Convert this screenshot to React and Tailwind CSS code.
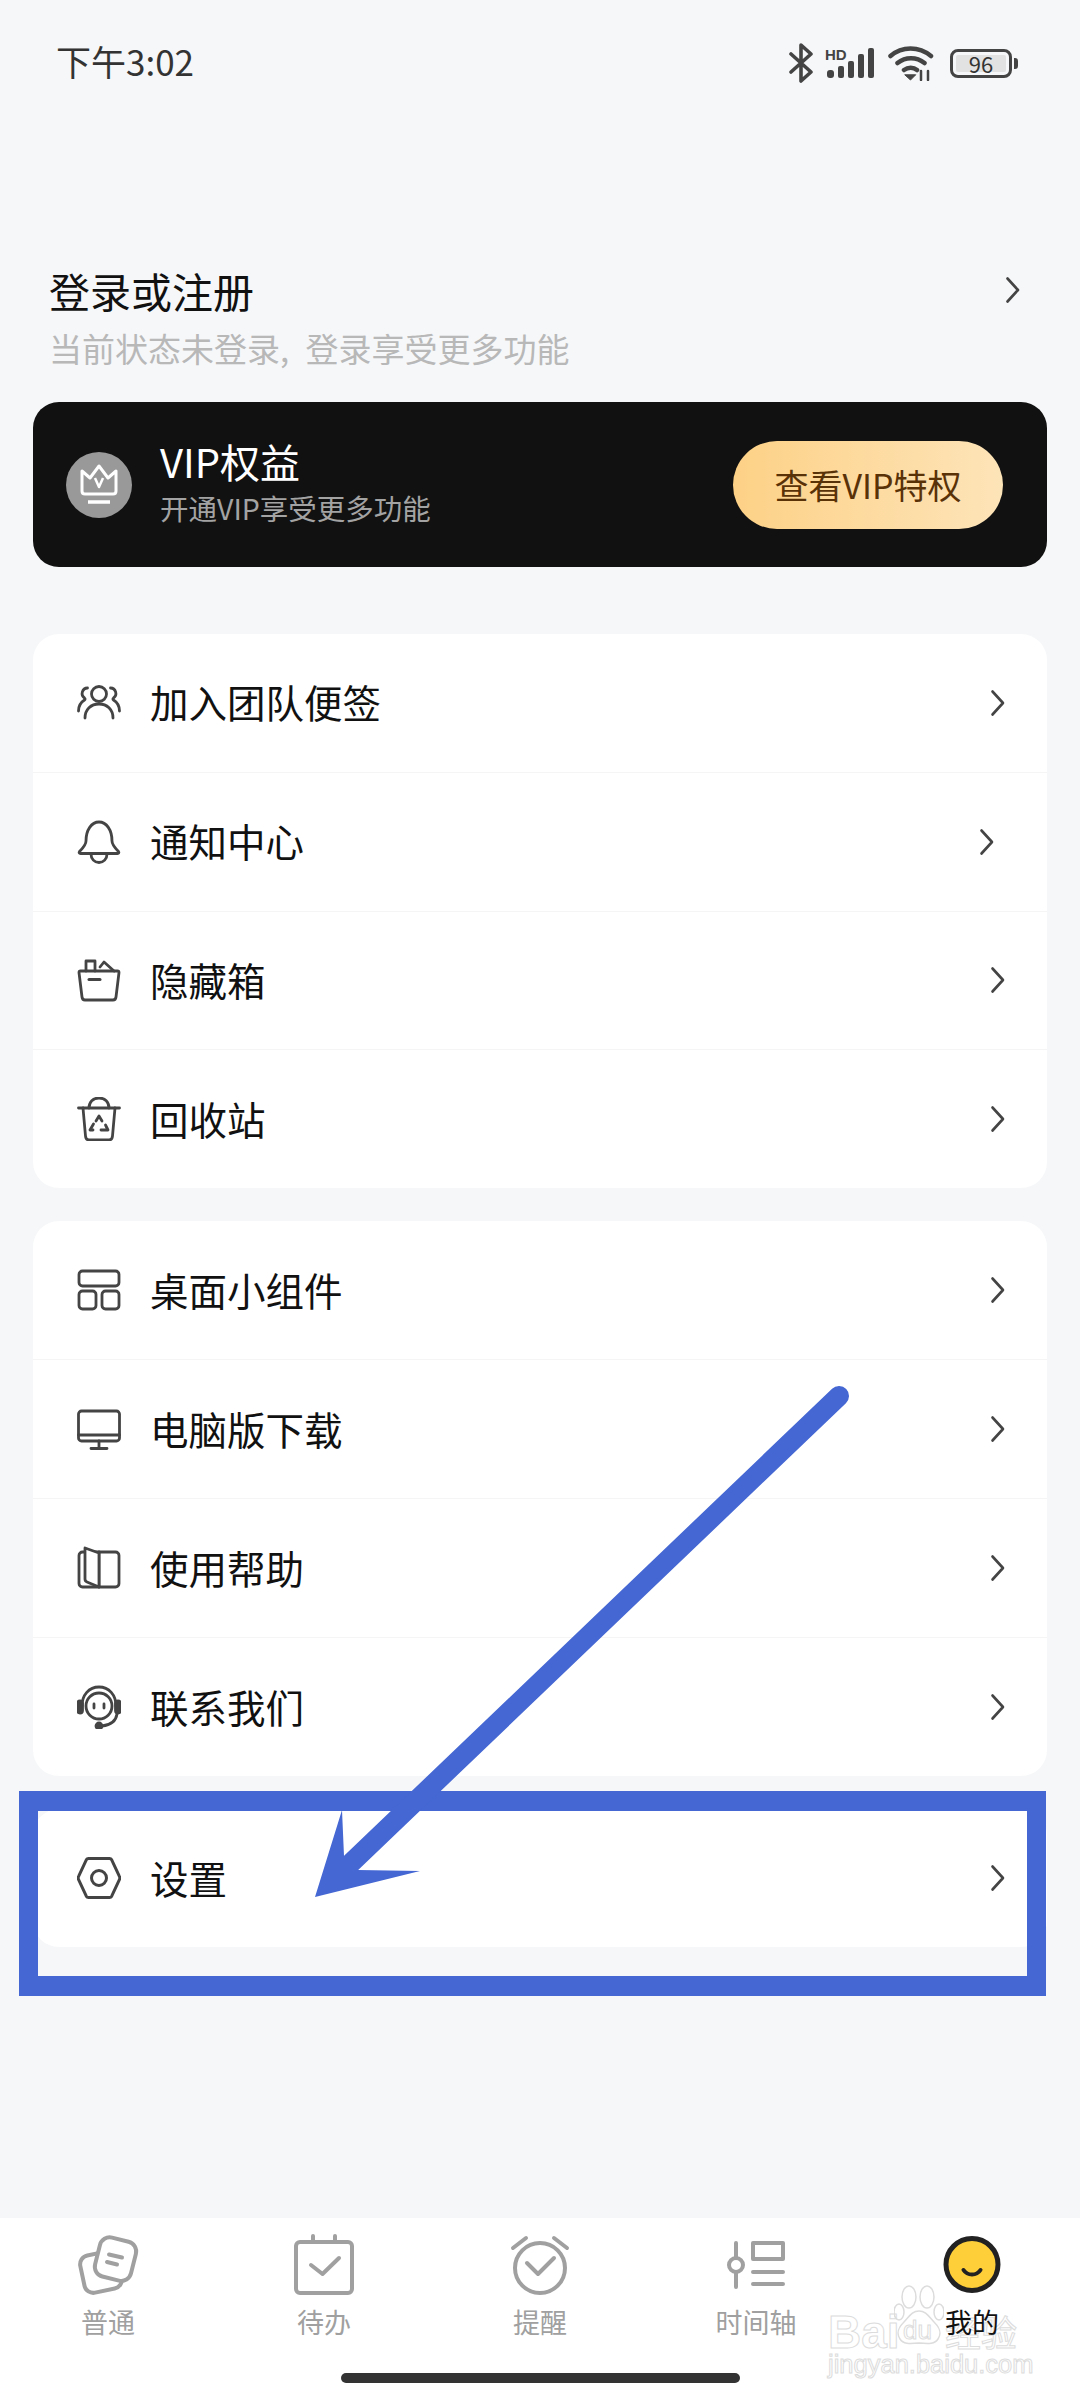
import React from "react";

const Chevron = ({ className = "" }) => (
  <svg width="16" height="28" viewBox="0 0 16 28" fill="none" stroke="#444" strokeWidth="2.6" strokeLinecap="round" strokeLinejoin="round" className={className}>
    <path d="M2.5 2.5 13 14 2.5 25.5" />
  </svg>
);

const MenuIcon = ({ children }) => (
  <svg width="44" height="44" viewBox="0 0 44 44" fill="none" stroke="#444" strokeWidth="2.8" strokeLinecap="round" strokeLinejoin="round" className="shrink-0">
    {children}
  </svg>
);

const UsersIcon = () => (
  <MenuIcon>
    <circle cx="22" cy="13" r="7.5" />
    <path d="M8 37c0-8.5 6-14 14-14s14 5.500 14 14" />
    <path d="M10.500 7a5.500 5.500 0 0 0-3 10c.8.6.8 1.500 0 2C3.500 21.500 1.500 25 1.500 30" />
    <path d="M33.500 7a5.500 5.500 0 0 1 3 10c-.8.6-.8 1.500 0 2 4 2.500 6 6 6 11" />
  </MenuIcon>
);

const BellIcon = () => (
  <MenuIcon>
    <path d="M9 21c0-11 5.500-19 13-19s13 8 13 19c0 4 3 7 6.500 10.500.8 1.200.3 2-1 2H3.500c-1.300 0-1.800-.8-1-2C6 28 9 25 9 21Z" />
    <path d="M14 34c0 5 3.500 8.500 8 8.500s8-3.500 8-8.500" />
  </MenuIcon>
);

const BasketIcon = () => (
  <MenuIcon>
    <path d="M2 14.500c0-.8.6-1.500 1.500-1.500h37c.9 0 1.500.7 1.500 1.500L39 39c-.2 1.800-1.300 3-3 3H8c-1.700 0-2.800-1.200-3-3L2 14.500Z" />
    <path d="M9 13V3h9v10M23 9l4-5 10 9" />
    <path d="M12 21.500h11" strokeWidth="3" />
  </MenuIcon>
);

const TrashIcon = () => (
  <MenuIcon>
    <path d="M12 11c0-6 4-10 10-10s10 4 10 10" />
    <path d="M1.500 11h41" />
    <path d="M6 11l2.500 28c.2 2.300 1.500 4 3.500 4h20c2 0 3.300-1.700 3.500-4L38 11" />
    <path d="M19 24l3-5 3 5M28.500 28l2.500 5h-7M16 33h-3l3.500-6" strokeWidth="2.8" />
  </MenuIcon>
);

const WidgetIcon = () => (
  <MenuIcon>
    <rect x="2" y="3" width="40" height="15" rx="3.500" />
    <rect x="2" y="23" width="17" height="18" rx="3.500" />
    <rect x="25" y="23" width="17" height="18" rx="3.500" />
  </MenuIcon>
);

const MonitorIcon = () => (
  <MenuIcon>
    <rect x="1.500" y="4" width="41" height="30" rx="3" />
    <path d="M1.500 28h41M22 34v7M14 41.500h16" />
  </MenuIcon>
);

const BookIcon = () => (
  <MenuIcon>
    <rect x="2" y="6" width="40" height="35" rx="3.500" />
    <path d="M22 6v35" />
    <path d="M8 2l14 5v34L10 36c-1.300-.5-2-1.500-2-3V2Z" fill="#fff" />
  </MenuIcon>
);

const HeadsetIcon = () => (
  <MenuIcon>
    <path d="M5 21C5 10 12 2 22 2s17 8 17 19" />
    <rect x="9" y="8" width="26" height="26" rx="13" />
    <rect x="0.500" y="16" width="5" height="12" rx="2.500" fill="#444" />
    <rect x="38.500" y="16" width="5" height="12" rx="2.500" fill="#444" />
    <path d="M17 19v4M27 19v4" />
    <path d="M40 29c-1 7-6 11-15 12" />
    <circle cx="22" cy="41" r="3" fill="#444" />
  </MenuIcon>
);

const HexIcon = () => (
  <MenuIcon>
    <path d="M11.500 2.500h21c1 0 1.700.4 2.200 1.300l7.700 16.500c.5 1 .5 2.400 0 3.400l-7.700 16.500c-.5.900-1.200 1.300-2.200 1.300h-21c-1 0-1.700-.4-2.200-1.300L1.600 23.700c-.5-1-.5-2.400 0-3.400L9.300 3.800c.5-.9 1.200-1.300 2.200-1.300Z" strokeWidth="3" />
    <circle cx="22" cy="22" r="7.500" strokeWidth="3" />
  </MenuIcon>
);

const groupOne = [
  { name: "加入团队便签", icon: <UsersIcon /> },
  { name: "通知中心", icon: <BellIcon />, shift: true },
  { name: "隐藏箱", icon: <BasketIcon /> },
  { name: "回收站", icon: <TrashIcon /> },
];

const groupTwo = [
  { name: "桌面小组件", icon: <WidgetIcon /> },
  { name: "电脑版下载", icon: <MonitorIcon /> },
  { name: "使用帮助", icon: <BookIcon /> },
  { name: "联系我们", icon: <HeadsetIcon /> },
];

const MenuRow = ({ item }) => (
  <div className="flex-1 flex items-center pl-[44px] pr-[41px] border-b border-[#f5f5f6] last:border-b-0">
    {item.icon}
    <span className="ml-[29px] mb-[3px] text-[38.5px] leading-[50px] text-[#111]">{item.name}</span>
    <Chevron className={item.shift ? "ml-auto mr-[11px]" : "ml-auto"} />
  </div>
);

const NavIcon = ({ children }) => (
  <svg width="64" height="64" viewBox="0 0 64 64" fill="none" stroke="#a0a0a0" strokeWidth="4" strokeLinecap="round" strokeLinejoin="round">
    {children}
  </svg>
);

const tabs = [
  {
    name: "普通",
    icon: (
      <NavIcon>
        <rect x="6" y="20" width="38" height="38" rx="9" transform="rotate(-12 25 39)" />
        <rect x="21" y="6" width="37" height="40" rx="10" transform="rotate(14 39 26)" fill="#fff" />
        <path d="M33 21.500l13 3M31 29l10 2.500" />
      </NavIcon>
    ),
  },
  {
    name: "待办",
    icon: (
      <NavIcon>
        <rect x="4" y="9" width="56" height="51" rx="4" />
        <path d="M21 3v6M43 3v6M19 32l11.500 9L47 25" />
      </NavIcon>
    ),
  },
  {
    name: "提醒",
    icon: (
      <NavIcon>
        <circle cx="32" cy="35" r="25" />
        <path d="M5 15 18 5M59 15 46 5M19 30l11 11 16-16" />
      </NavIcon>
    ),
  },
  {
    name: "时间轴",
    icon: (
      <NavIcon>
        <path d="M12 10v15M12 39v15" />
        <circle cx="12" cy="32" r="7" />
        <rect x="29" y="10" width="30" height="16" />
        <path d="M29 39h30M29 51h30" />
      </NavIcon>
    ),
  },
  {
    name: "我的",
    active: true,
    icon: (
      <svg width="64" height="64" viewBox="0 0 64 64" fill="none">
        <circle cx="32" cy="31.500" r="26" fill="#ffcf39" stroke="#222" strokeWidth="5" />
        <path d="M23.500 37c2 3 5 4.500 8.500 4.500s6.500-1.500 8.500-4.500" stroke="#222" strokeWidth="4" strokeLinecap="round" />
      </svg>
    ),
  },
];

export default function App() {
  return (
    <div className="relative w-[1080px] h-[2400px] flex flex-col overflow-hidden bg-[#f6f7f9] font-['Noto_Sans_CJK_SC',sans-serif]">
      {/* status bar */}
      <div className="h-[126px] flex items-center justify-between pl-[56px] pr-[62px]">
        <span className="mb-[3px] text-[35px] text-[#333]">下午3:02</span>
        <div className="flex items-center">
          <svg width="24" height="40" viewBox="0 0 24 40" fill="none" stroke="#444" strokeWidth="3.600" strokeLinecap="round" strokeLinejoin="round">
            <path d="M2 11l20 18-10 9V2l10 9L2 29" />
          </svg>
          <div className="relative ml-[12px] w-[50px] h-[30px]">
            <span className="absolute left-0 top-[-1px] text-[15px] leading-[15px] font-bold text-[#444] font-['Liberation_Sans',sans-serif]">HD</span>
            <svg width="50" height="30" viewBox="0 0 50 30" fill="#444" className="absolute inset-0">
              <rect x="2" y="22" width="7" height="8" rx="3" />
              <rect x="13" y="18" width="6" height="12" rx="2" />
              <rect x="23" y="13" width="6" height="17" rx="2" />
              <rect x="33" y="6" width="6" height="24" rx="2" />
              <rect x="43" y="0" width="6" height="30" rx="2" />
            </svg>
          </div>
          <svg width="46" height="36" viewBox="0 0 46 36" fill="none" stroke="#444" strokeWidth="4.500" strokeLinecap="round" className="ml-[13px]">
            <path d="M2.500 11C14 1 31 1 43 11M9.500 18c8-6.500 19-6.500 27 0M16 25c4-3 9.500-3 13 0" />
            <path d="M17 30l5.500 5 5-5Z" fill="#444" strokeWidth="1" />
            <path d="M33 26v9M40 26v9" strokeWidth="2.500" />
          </svg>
          <div className="ml-[16px] flex items-center">
            <div className="w-[62px] h-[29px] rounded-[8px] border-[3px] border-[#444] p-[3px]">
              <div className="h-full rounded-[2px] bg-[#e2e2e2] flex items-center justify-center text-[22px] leading-none text-[#333]">96</div>
            </div>
            <div className="ml-[2px] w-[4px] h-[11px] rounded-r-[3px] bg-[#444]" />
          </div>
        </div>
      </div>

      {/* login */}
      <div className="mt-[139px] pl-[49px] pr-[59px] flex items-center justify-between">
        <span className="text-[41px] leading-[50px] text-[#111]">登录或注册</span>
        <Chevron />
      </div>
      <div className="mt-[11px] mb-[2px] pl-[49px] text-[33px] leading-[44px] text-[#b8b8b8]">
        当前状态未登录<span className="mr-[9px]">,</span> 登录享受更多功能
      </div>

      {/* vip */}
      <div className="mt-[30px] mx-[33px] h-[165px] rounded-[26px] bg-[#111] flex items-center pl-[33px] pr-[44px]">
        <div className="w-[66px] h-[66px] rounded-full bg-[#999] flex items-center justify-center">
          <svg width="40" height="44" viewBox="0 0 40 44" fill="none" stroke="#fff" strokeWidth="3" strokeLinejoin="round">
            <path d="M3 8l8 7 9-12 9 12 8-7v20c0 2-1 3-3 3H6c-2 0-3-1-3-3V8Z" />
            <path d="M16 15l4 9 4-9" strokeWidth="2.500" />
            <path d="M9 39h22" strokeWidth="3.500" />
          </svg>
        </div>
        <div className="ml-[28px] mb-[4px] flex flex-col">
          <span className="text-[40px] leading-[48px] text-white">VIP权益</span>
          <span className="mt-[3px] text-[28.5px] leading-[40px] text-[#a3a3a3]">开通VIP享受更多功能</span>
        </div>
        <div className="ml-auto w-[270px] h-[88px] rounded-full bg-gradient-to-r from-[#fdd186] to-[#fde4b8] flex items-center justify-center text-[34px] text-[#5a3208]">查看VIP特权</div>
      </div>

      {/* menu groups */}
      <div className="mt-[67px] mx-[33px] h-[554px] rounded-[26px] bg-white flex flex-col">
        {groupOne.map((item) => (
          <MenuRow key={item.name} item={item} />
        ))}
      </div>
      <div className="mt-[33px] mx-[33px] h-[555px] rounded-[26px] bg-white flex flex-col">
        {groupTwo.map((item) => (
          <MenuRow key={item.name} item={item} />
        ))}
      </div>
      <div className="mt-[33px] mx-[33px] h-[138px] rounded-[26px] bg-white flex flex-col">
        <MenuRow item={{ name: "设置", icon: <HexIcon /> }} />
      </div>

      {/* bottom nav */}
      <div className="mt-auto h-[182px] bg-white flex flex-col">
        <div className="grid grid-cols-5 pt-[15px]">
          {tabs.map((tab) => (
            <div key={tab.name} className="flex flex-col items-center">
              {tab.icon}
              <span className={`mt-[7px] text-[27px] leading-[36px] ${tab.active ? "text-[#111] z-10" : "text-[#a0a0a0]"}`}>{tab.name}</span>
            </div>
          ))}
        </div>
        <div className="mt-auto mb-[17px] mx-auto w-[399px] h-[10px] rounded-full bg-[#333]" />
      </div>

      {/* watermark */}
      <div className="absolute left-[828px] top-[2285px] w-[194px] h-[92px]">
        <span className="absolute left-0 top-[24px] text-[46px] leading-[46px] font-bold text-transparent [-webkit-text-stroke:1px_#dcdcdc] font-['Liberation_Sans',sans-serif]">Bai</span>
        <svg width="50" height="64" viewBox="0 0 50 64" fill="none" stroke="#dcdcdc" strokeWidth="1.500" className="absolute left-[66px] top-0">
          <ellipse cx="15" cy="12" rx="7" ry="11" />
          <ellipse cx="33" cy="12" rx="7" ry="11" />
          <ellipse cx="5" cy="27" rx="5" ry="8" />
          <ellipse cx="45" cy="27" rx="5" ry="8" />
          <path d="M25 26c-7 0-10 6-15 11-6 6-8 11-4 17 3 5 9 5 19 4 10 1 16 1 19-4 4-6 2-11-4-17-5-5-8-11-15-11Z" />
        </svg>
        <span className="absolute left-[75px] top-[32px] text-[26px] leading-[26px] text-transparent [-webkit-text-stroke:1px_#dcdcdc] font-['Liberation_Sans',sans-serif]">du</span>
        <span className="absolute left-[117px] top-[28px] text-[36px] leading-[36px] text-transparent [-webkit-text-stroke:1px_#dcdcdc]">经验</span>
        <span className="absolute left-0 top-[66px] text-[25.500px] leading-[26px] text-transparent [-webkit-text-stroke:1px_#dcdcdc] font-['Liberation_Sans',sans-serif]">jingyan.baidu.com</span>
      </div>

      {/* annotation */}
      <div className="absolute left-[19px] top-[1791px] w-[1027px] h-[205px] border-[#4467d3] border-x-[19px] border-y-[20px]" />
      <svg width="1080" height="2400" viewBox="0 0 1080 2400" className="absolute inset-0 pointer-events-none">
        <path d="M839 1396 351 1863" stroke="#4467d3" strokeWidth="20" strokeLinecap="round" />
        <path d="M342 1810 315 1897 420 1871 358 1870 344 1856Z" fill="#4467d3" />
      </svg>
    </div>
  );
}
